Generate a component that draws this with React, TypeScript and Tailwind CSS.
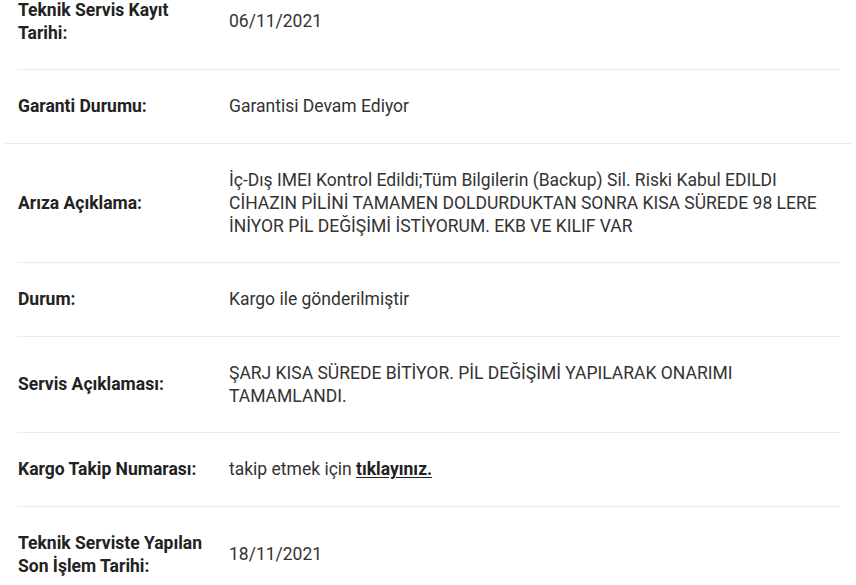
const rows: { label: string; value: React.ReactNode; wide?: boolean }[] = [
  { label: 'Teknik Servis Kayıt Tarihi:', value: '06/11/2021' },
  { label: 'Garanti Durumu:', value: 'Garantisi Devam Ediyor', wide: true },
  {
    label: 'Arıza Açıklama:',
    value:
      'İç-Dış IMEI Kontrol Edildi;Tüm Bilgilerin (Backup) Sil. Riski Kabul EDILDI CİHAZIN PİLİNİ TAMAMEN DOLDURDUKTAN SONRA KISA SÜREDE 98 LERE İNİYOR PİL DEĞİŞİMİ İSTİYORUM. EKB VE KILIF VAR',
  },
  { label: 'Durum:', value: 'Kargo ile gönderilmiştir' },
  {
    label: 'Servis Açıklaması:',
    value: 'ŞARJ KISA SÜREDE BİTİYOR. PİL DEĞİŞİMİ YAPILARAK ONARIMI TAMAMLANDI.',
  },
  {
    label: 'Kargo Takip Numarası:',
    value: (
      <>
        takip etmek için{' '}
        <a href="#" className="font-bold text-[#222] underline underline-offset-2">
          tıklayınız.
        </a>
      </>
    ),
  },
  { label: 'Teknik Serviste Yapılan Son İşlem Tarihi:', value: '18/11/2021' },
];

export default function App() {
  return (
    <div className="h-[585px] overflow-hidden bg-white font-['Roboto',sans-serif] text-[17.5px] leading-[22.7px]">
      <div className="-mt-[26px] pl-[17px] pr-[16px]">
        {rows.map((row, i) => (
          <div key={i}>
            <div className="flex items-center py-[25px]">
              <div className="w-[212px] shrink-0 pl-px pr-3 font-bold text-[#222]">{row.label}</div>
              <div className="flex-1 text-[#333]">{row.value}</div>
            </div>
            {/* row divider; the warranty one runs wider */}
            {i < rows.length - 1 && (
              <div className={row.wide ? '-mx-[12px] h-px bg-[#ececec]' : 'h-px bg-[#ececec]'} />
            )}
          </div>
        ))}
      </div>
    </div>
  );
}
